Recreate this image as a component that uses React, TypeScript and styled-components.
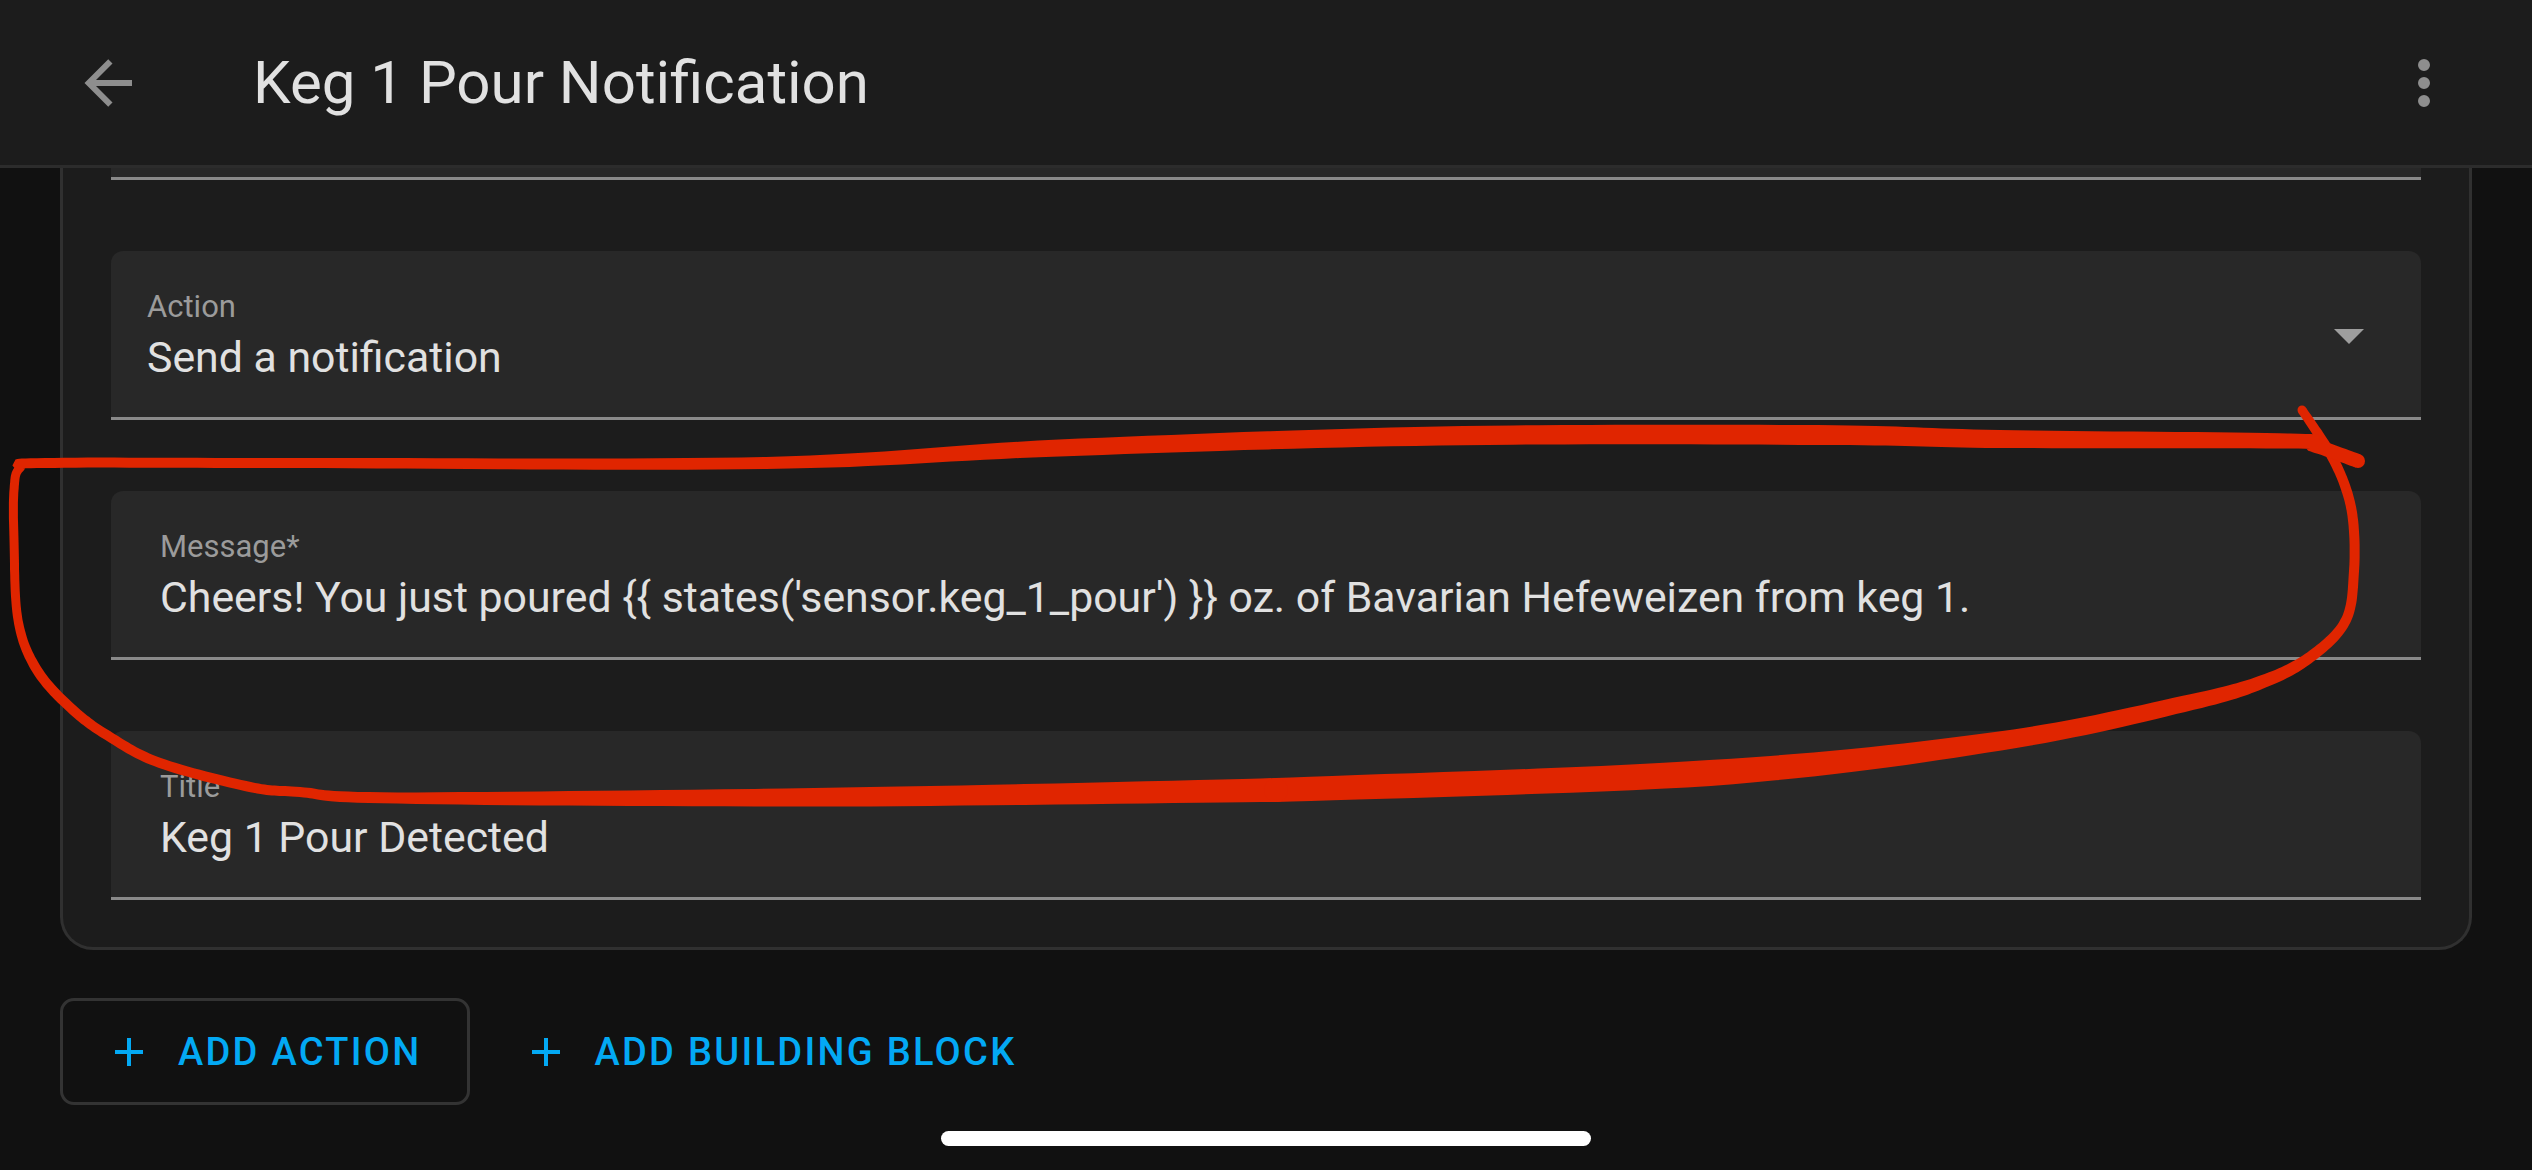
import React from "react";
import styled, { createGlobalStyle } from "styled-components";

const GlobalStyle = createGlobalStyle`
  html, body { margin: 0; padding: 0; background: #111111; }
  body {
    font-family: Roboto, "Noto Sans", "Liberation Sans", sans-serif;
    -webkit-font-smoothing: antialiased;
  }
  * { box-sizing: border-box; }
`;

const Screen = styled.div`
  position: relative;
  width: 2532px;
  height: 1170px;
  overflow: hidden;
  display: flex;
  flex-direction: column;
  background: #111111;
`;

const Toolbar = styled.header`
  flex: none;
  height: 168px;
  display: flex;
  align-items: center;
  padding: 0 36px;
  background: #1c1c1c;
  border-bottom: 3px solid #2c2c2c;
`;

const IconButton = styled.button`
  flex: none;
  width: 144px;
  height: 144px;
  display: flex;
  align-items: center;
  justify-content: center;
  padding: 0;
  border: 0;
  background: none;
  color: #8e8e8e;
  svg { width: 72px; height: 72px; fill: currentColor; }
`;

const Title = styled.h1`
  flex: 1;
  margin: 0 0 0 73px;
  font-size: 60px;
  line-height: 60px;
  font-weight: 400;
  color: #e1e1e1;
  white-space: nowrap;
`;

const Body = styled.main`
  flex: 1;
  display: flex;
  flex-direction: column;
  padding: 0 60px;
  overflow: hidden;
`;

const Card = styled.section`
  display: flex;
  flex-direction: column;
  gap: 71px;
  padding: 0 48px 47px;
  background: #1c1c1c;
  border: 3px solid #303030;
  border-top: 0;
  border-radius: 0 0 33px 33px;
`;

const FieldTail = styled.div`
  height: 12px;
  background: #282828;
  border-bottom: 3px solid #8a8a8a;
`;

const Field = styled.div<{ $inset: number }>`
  height: 169px;
  display: flex;
  align-items: stretch;
  padding: 0 57px 0 ${(p) => p.$inset}px;
  background: #282828;
  border-bottom: 3px solid #8a8a8a;
  border-radius: 12px 12px 0 0;
`;

const FieldText = styled.div`
  flex: 1;
  display: flex;
  flex-direction: column;
  padding-top: 40px;
  min-width: 0;
`;

const Label = styled.span`
  font-size: 31px;
  line-height: 31px;
  color: #9b9b9b;
  white-space: nowrap;
`;

const Value = styled.span`
  margin-top: 14px;
  font-size: 42.8px;
  line-height: 43px;
  color: #e1e1e1;
  white-space: nowrap;
`;

const DropArrow = styled.span`
  align-self: center;
  margin-top: 4px;
  width: 0;
  height: 0;
  border-left: 15px solid transparent;
  border-right: 15px solid transparent;
  border-top: 15px solid #9e9e9e;
`;

const Actions = styled.div`
  display: flex;
  gap: 7px;
  margin-top: 48px;
`;

const ActionButton = styled.button<{ $outlined?: boolean }>`
  height: 107px;
  display: inline-flex;
  align-items: center;
  gap: 35px;
  padding: 0 45px 0 52px;
  background: transparent;
  border: 3px solid ${(p) => (p.$outlined ? "#333333" : "transparent")};
  border-radius: 14px;
  color: #03a9f4;
  font-family: Roboto, "Noto Sans", "Liberation Sans", sans-serif;
  font-size: 38px;
  line-height: 38px;
  font-weight: 500;
  letter-spacing: 2.3px;
  text-transform: uppercase;
  svg { width: 28px; height: 28px; fill: currentColor; flex: none; }
`;

const HomeIndicator = styled.div`
  position: absolute;
  left: 50%;
  bottom: 24px;
  width: 650px;
  height: 15px;
  margin-left: -325px;
  border-radius: 8px;
  background: #ffffff;
`;

const Annotation = styled.svg`
  position: absolute;
  inset: 0;
  width: 2532px;
  height: 1170px;
  pointer-events: none;
`;

type P = [number, number, number];

function ribbon(pts: P[]): string {
  const samples: P[] = [];
  const n = 16;
  for (let i = 0; i < pts.length - 1; i++) {
    const p0 = pts[Math.max(i - 1, 0)];
    const p1 = pts[i];
    const p2 = pts[i + 1];
    const p3 = pts[Math.min(i + 2, pts.length - 1)];
    for (let s = 0; s < n; s++) {
      const t = s / n;
      const t2 = t * t;
      const t3 = t2 * t;
      const cr = (a: number, b: number, c: number, d: number) =>
        0.5 * (2 * b + (-a + c) * t + (2 * a - 5 * b + 4 * c - d) * t2 + (-a + 3 * b - 3 * c + d) * t3);
      samples.push([
        cr(p0[0], p1[0], p2[0], p3[0]),
        cr(p0[1], p1[1], p2[1], p3[1]),
        p1[2] + (p2[2] - p1[2]) * t,
      ]);
    }
  }
  samples.push(pts[pts.length - 1]);
  const left: string[] = [];
  const right: string[] = [];
  for (let i = 0; i < samples.length; i++) {
    const a = samples[Math.max(i - 1, 0)];
    const b = samples[Math.min(i + 1, samples.length - 1)];
    let dx = b[0] - a[0];
    let dy = b[1] - a[1];
    const len = Math.hypot(dx, dy) || 1;
    dx /= len;
    dy /= len;
    const [x, y, w] = samples[i];
    const h = w / 2;
    left.push(`${(x - dy * h).toFixed(1)},${(y + dx * h).toFixed(1)}`);
    right.push(`${(x + dy * h).toFixed(1)},${(y - dx * h).toFixed(1)}`);
  }
  return `M${left.join(" L")} L${right.reverse().join(" L")} Z`;
}

const strokeA: P[] = [
  [2302, 410, 9], [2327, 448, 10], [2344, 483, 10], [2353, 520, 10], [2354, 571, 10],
  [2346, 620, 10], [2313, 655, 11], [2267, 680, 13], [2192, 702, 16], [2000, 741, 19],
  [1710, 773, 26], [1276, 790, 24],
];
const strokeB: P[] = [
  [1276, 790, 24], [842, 797, 19], [398, 798, 11], [300, 792, 10], [250, 787, 10],
  [160, 763, 10], [110, 737, 10], [73, 710, 10], [37, 670, 10], [18, 620, 9],
  [14, 540, 9], [14, 490, 9], [20, 468, 9], [45, 463, 10], [300, 463, 10],
  [766, 463, 12], [1059, 448, 17], [1439, 436, 19], [1818, 435, 20], [2000, 439, 18],
  [2290, 441, 15], [2313, 445, 14], [2358, 461, 14],
];

const RED = "#e02500";

const ArrowBack = () => (
  <svg viewBox="0 0 24 24">
    <path d="M20,11V13H8L13.5,18.5L12.08,19.92L4.16,12L12.08,4.08L13.5,5.5L8,11H20Z" />
  </svg>
);

const DotsVertical = () => (
  <svg viewBox="0 0 24 24">
    <path d="M12,16A2,2 0 0,1 14,18A2,2 0 0,1 12,20A2,2 0 0,1 10,18A2,2 0 0,1 12,16M12,10A2,2 0 0,1 14,12A2,2 0 0,1 12,14A2,2 0 0,1 10,12A2,2 0 0,1 12,10M12,4A2,2 0 0,1 14,6A2,2 0 0,1 12,8A2,2 0 0,1 10,6A2,2 0 0,1 12,4Z" />
  </svg>
);

const Plus = () => (
  <svg viewBox="5 5 14 14">
    <path d="M19,13H13V19H11V13H5V11H11V5H13V11H19V13Z" />
  </svg>
);

export default function App() {
  const a = strokeA;
  const b = strokeB;
  return (
    <>
      <GlobalStyle />
      <Screen>
        <Toolbar>
          <IconButton aria-label="Back">
            <ArrowBack />
          </IconButton>
          <Title>Keg 1 Pour Notification</Title>
          <IconButton aria-label="Menu">
            <DotsVertical />
          </IconButton>
        </Toolbar>
        <Body>
          <Card>
            <FieldTail />
            <Field $inset={36}>
              <FieldText>
                <Label>Action</Label>
                <Value>Send a notification</Value>
              </FieldText>
              <DropArrow />
            </Field>
            <Field $inset={49}>
              <FieldText>
                <Label>Message*</Label>
                <Value>
                  Cheers! You just poured {"{{ states('sensor.keg_1_pour') }}"} oz. of Bavarian Hefeweizen from keg 1.
                </Value>
              </FieldText>
            </Field>
            <Field $inset={49}>
              <FieldText>
                <Label>Title</Label>
                <Value>Keg 1 Pour Detected</Value>
              </FieldText>
            </Field>
          </Card>
          <Actions>
            <ActionButton $outlined>
              <Plus />
              Add action
            </ActionButton>
            <ActionButton>
              <Plus />
              Add building block
            </ActionButton>
          </Actions>
        </Body>
        <Annotation viewBox="0 0 2532 1170">
          <path d={ribbon(a)} fill={RED} />
          <path d={ribbon(b)} fill={RED} />
          <circle cx={a[0][0]} cy={a[0][1]} r={a[0][2] / 2} fill={RED} />
          <circle cx={1276} cy={790} r={12} fill={RED} />
          <circle cx={b[b.length - 1][0]} cy={b[b.length - 1][1]} r={b[b.length - 1][2] / 2} fill={RED} />
        </Annotation>
        <HomeIndicator />
      </Screen>
    </>
  );
}
